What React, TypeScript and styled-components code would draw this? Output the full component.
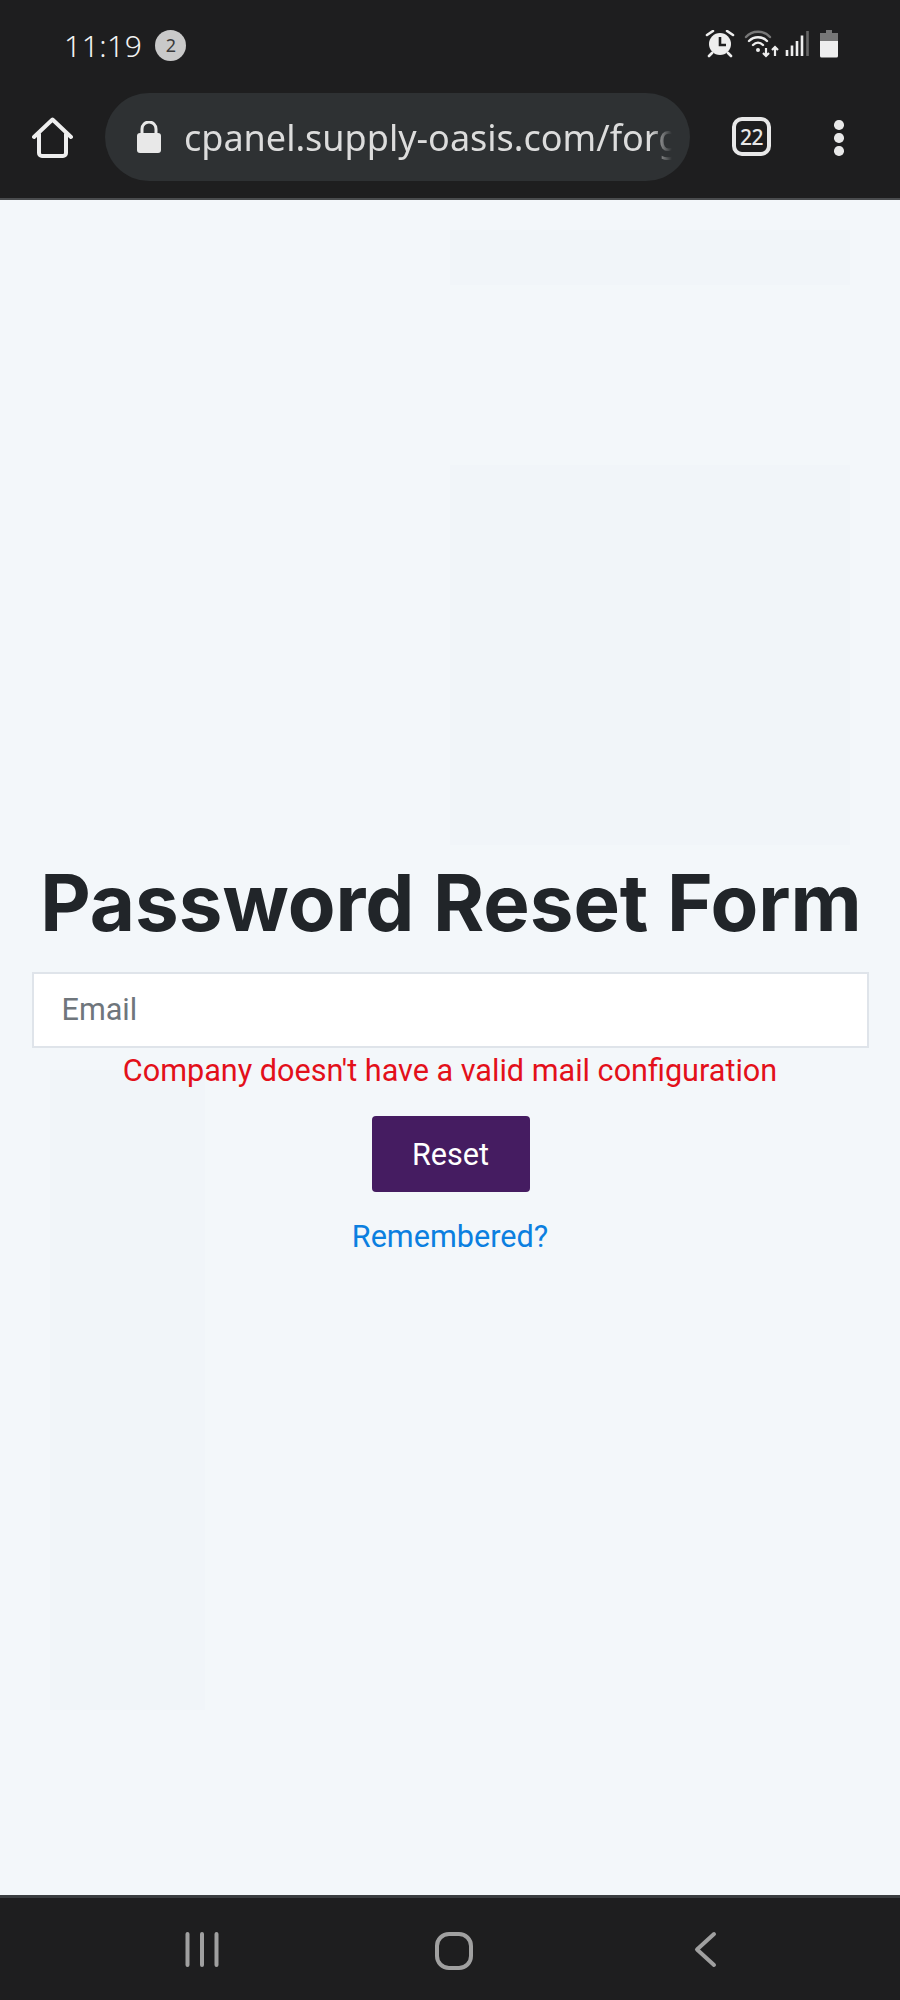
import React from "react";
import styled, { createGlobalStyle } from "styled-components";

const Global = createGlobalStyle`
  html, body { margin: 0; padding: 0; background: #f3f7fa; }
  * { box-sizing: border-box; }
`;

const Screen = styled.div`
  width: 900px;
  height: 2000px;
  display: flex;
  flex-direction: column;
  overflow: hidden;
  font-family: Roboto, "Liberation Sans", sans-serif;
`;

const Chrome = styled.header`
  height: 200px;
  flex: none;
  background: #1e1e1f;
  border-bottom: 2px solid #4a4c4e;
  display: flex;
  flex-direction: column;
`;

const StatusBar = styled.div`
  height: 93px;
  flex: none;
  padding: 0 60px 3px 64px;
  display: flex;
  align-items: center;
  justify-content: space-between;
`;

const TimeGroup = styled.div`
  display: flex;
  align-items: center;
  gap: 13px;
`;

const Time = styled.span`
  font-family: "Noto Sans", sans-serif;
  font-size: 30px;
  font-weight: 300;
  letter-spacing: 0.5px;
  color: #f2f2f2;
`;

const Badge = styled.span`
  width: 31px;
  height: 31px;
  border-radius: 50%;
  background: #c9c9c9;
  color: #3a3a3a;
  font-family: "Noto Sans", sans-serif;
  font-size: 18px;
  display: flex;
  align-items: center;
  justify-content: center;
`;

const StatusIcons = styled.div`
  display: flex;
  align-items: center;
`;

const Toolbar = styled.div`
  flex: 1;
  display: flex;
  align-items: flex-start;
  padding-left: 32px;
`;

const HomeSlot = styled.div`
  width: 41px;
  height: 41px;
  margin-top: 24px;
  flex: none;
`;

const UrlPill = styled.div`
  width: 585px;
  height: 88px;
  margin-left: 32px;
  flex: none;
  background: #2e3133;
  border-radius: 44px;
  display: flex;
  align-items: center;
  padding: 0 18px 0 32px;
`;

const UrlText = styled.span`
  margin-left: 23px;
  font-family: "Noto Sans", sans-serif;
  font-size: 36px;
  color: #dcdcdc;
  white-space: nowrap;
  overflow: hidden;
  flex: 1;
  min-width: 0;
  mask-image: linear-gradient(to right, #000 calc(100% - 22px), transparent);
`;

const TabCount = styled.div`
  width: 39px;
  height: 39px;
  margin: 24px 0 0 42px;
  flex: none;
  border: 4px solid #e8e8e8;
  border-radius: 10px;
  color: #e8e8e8;
  font-family: "Noto Sans", sans-serif;
  font-size: 21px;
  font-weight: 500;
  letter-spacing: -0.5px;
  display: flex;
  align-items: center;
  justify-content: center;
`;

const MenuDots = styled.div`
  display: flex;
  flex-direction: column;
  gap: 3.500px;
  margin: 27px 0 0 63px;
`;

const Dot = styled.span`
  width: 9.500px;
  height: 9.500px;
  border-radius: 50%;
  background: #e8e8e8;
`;

const Page = styled.main`
  flex: 1;
  min-height: 0;
  padding: 655px 32px 0 32px;
  display: flex;
  flex-direction: column;
  align-items: center;
  background-color: #f3f7fa;
  background-image:
    linear-gradient(#f1f5f9, #f1f5f9),
    linear-gradient(#f1f5f9, #f1f5f9),
    linear-gradient(#f1f5f9, #f1f5f9);
  background-repeat: no-repeat;
  background-size: 400px 380px, 155px 640px, 400px 55px;
  background-position: 450px 265px, 50px 870px, 450px 30px;
`;

const Title = styled.h1`
  margin: 0 0 0 2px;
  font-family: Inter, "Liberation Sans", sans-serif;
  font-size: 78px;
  line-height: 96px;
  font-weight: 700;
  color: #212529;
  white-space: nowrap;
`;

const EmailInput = styled.input`
  display: block;
  width: 837px;
  height: 76px;
  margin-top: 21px;
  padding: 0 28px 2px;
  background: #fff;
  border: 2px solid #dfe4ea;
  border-radius: 0;
  outline: none;
  font-family: Roboto, sans-serif;
  font-size: 30.600px;
  color: #212529;
  &::placeholder { color: #6f767c; opacity: 1; }
`;

const ErrorText = styled.p`
  margin: 1px 0 0;
  font-size: 30.600px;
  line-height: 44px;
  color: #e3101a;
  white-space: nowrap;
`;

const ResetButton = styled.button`
  width: 158px;
  height: 76px;
  margin: 23px 0 0 1px;
  background: #451c61;
  color: #fff;
  border: none;
  border-radius: 4px;
  font-family: Roboto, sans-serif;
  font-size: 30.600px;
`;

const BackLink = styled.a`
  margin-top: 23px;
  font-size: 30.600px;
  line-height: 44px;
  color: #0b7fe0;
  text-decoration: none;
`;

const NavBar = styled.nav`
  height: 105px;
  flex: none;
  background: #1e1e1f;
  border-top: 3px solid #3a3d40;
  display: flex;
  align-items: flex-start;
  padding: 33px 0 0 184px;
`;

const NavSlot = styled.div<{ $w: number; $gap: number }>`
  width: ${p => p.$w}px;
  margin-left: ${p => p.$gap}px;
  flex: none;
  display: flex;
`;

export default function App() {
  return (
    <Screen>
      <Global />
      <Chrome>
        <StatusBar>
          <TimeGroup>
            <Time>11:19</Time>
            <Badge>2</Badge>
          </TimeGroup>
          <StatusIcons>
            <svg width="135" height="30" viewBox="0 0 135 30" fill="none">
              {/* alarm */}
              <circle cx="15" cy="14" r="11" fill="#eee" />
              <path d="M15 7v8h6" stroke="#1e1e1f" strokeWidth="2.600" />
              <path d="M2 5l6-4M28 5l-6-4M7 23l-3 3M23 23l3 3" stroke="#eee" strokeWidth="2.600" strokeLinecap="round" />
              {/* wifi */}
              <path d="M41 7C47 0 59 0 65 7" stroke="#777" strokeWidth="2.400" strokeLinecap="round" />
              <path d="M44 11c5-5 13-5 18 0" stroke="#eee" strokeWidth="2.400" strokeLinecap="round" />
              <path d="M48 15c3-3 7-3 10 0" stroke="#eee" strokeWidth="2.400" strokeLinecap="round" />
              <circle cx="53" cy="20" r="2" fill="#eee" />
              <path d="M61 18v8M58 23l3 3 3-3" stroke="#eee" strokeWidth="2.200" />
              <path d="M70 26v-9M67 20l3-3 3 3" stroke="#eee" strokeWidth="2.200" />
              {/* signal */}
              <path d="M82 20v6M87 15.500v10.500M92 11v15M97 5.500v20.500" stroke="#eee" strokeWidth="2.600" />
              <path d="M102.500 1v25" stroke="#666" strokeWidth="2.600" />
              {/* battery */}
              <path d="M121 0h6v3h6v9h-18v-9h6z" fill="#777" />
              <path d="M115 11h18v15a1.500 1.500 0 0 1-1.500 1.500h-15a1.500 1.500 0 0 1-1.500-1.500z" fill="#eee" />
            </svg>
          </StatusIcons>
        </StatusBar>
        <Toolbar>
          <HomeSlot>
            <svg width="41" height="41" viewBox="0 0 41 41" fill="none">
              <path d="M2 20L20.500 2.500 39 20M7 17v19a3 3 0 0 0 3 3h21a3 3 0 0 0 3-3V17" stroke="#eee" strokeWidth="4" strokeLinecap="round" strokeLinejoin="round" />
            </svg>
          </HomeSlot>
          <UrlPill>
            <svg width="24" height="32" viewBox="0 0 24 32" style={{ flex: "none" }}>
              <path d="M5 13V8a7 7 0 0 1 14 0v5" fill="none" stroke="#e8e8e8" strokeWidth="3" />
              <rect x="0" y="12" width="24" height="20" rx="3" fill="#e8e8e8" />
            </svg>
            <UrlText>cpanel.supply-oasis.com/forg</UrlText>
          </UrlPill>
          <TabCount>22</TabCount>
          <MenuDots>
            <Dot />
            <Dot />
            <Dot />
          </MenuDots>
        </Toolbar>
      </Chrome>
      <Page>
        <Title>Password Reset Form</Title>
        <EmailInput placeholder="Email" />
        <ErrorText>Company doesn't have a valid mail configuration</ErrorText>
        <ResetButton>Reset</ResetButton>
        <BackLink href="#">Remembered?</BackLink>
      </Page>
      <NavBar>
        <NavSlot $w={36} $gap={0}>
          <svg width="36" height="38" viewBox="0 0 36 38">
            <path d="M3.500 3v31M18 3v31M32.500 3v31" stroke="#a0a0a0" strokeWidth="4" strokeLinecap="round" />
          </svg>
        </NavSlot>
        <NavSlot $w={40} $gap={214}>
          <svg width="40" height="40" viewBox="0 -2 40 40" fill="none">
            <rect x="3" y="1" width="34" height="34" rx="12" stroke="#a0a0a0" strokeWidth="4" />
          </svg>
        </NavSlot>
        <NavSlot $w={24} $gap={219}>
          <svg width="24" height="38" viewBox="0 0 24 38" fill="none">
            <path d="M21 3L4 18.500l17 15.500" stroke="#a0a0a0" strokeWidth="4" strokeLinecap="round" strokeLinejoin="round" />
          </svg>
        </NavSlot>
      </NavBar>
    </Screen>
  );
}
